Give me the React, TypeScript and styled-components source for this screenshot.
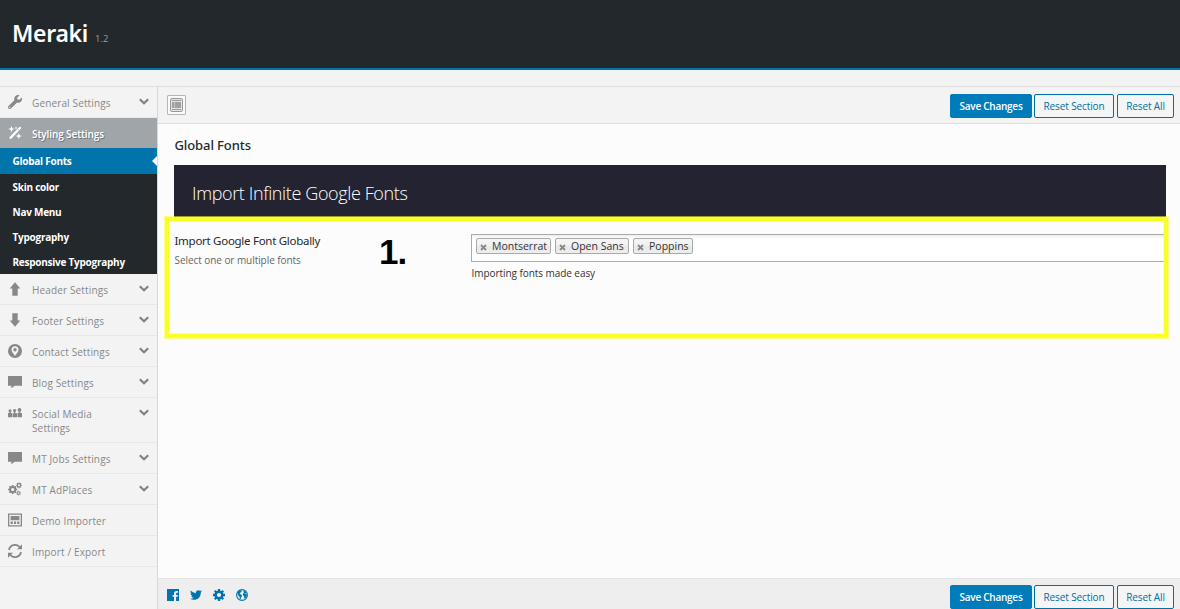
import React from "react";
import styled, { createGlobalStyle, css } from "styled-components";
import { FaWrench, FaTwitter } from "react-icons/fa";

const GlobalStyle = createGlobalStyle`
  *, *::before, *::after { box-sizing: border-box; }
  html, body { margin: 0; padding: 0; }
  body {
    font-family: "Open Sans", "Noto Sans", sans-serif;
    background: #f3f3f3;
    color: #23282d;
    overflow: hidden;
  }
  svg { display: block; }
`;

const Page = styled.div`
  width: 1180px;
  height: 609px;
  display: flex;
  flex-direction: column;
  overflow: hidden;
`;

const Header = styled.header`
  height: 70px;
  flex: none;
  display: flex;
  align-items: baseline;
  padding: 16px 12px 0;
  background: #23282d;
  border-bottom: 2px solid #0074ab;
`;

const Brand = styled.h1`
  margin: 0;
  font-family: "Noto Sans", sans-serif;
  font-size: 23px;
  line-height: 34px;
  font-weight: 600;
  letter-spacing: -0.3px;
  color: #fff;
`;

const Version = styled.span`
  margin-left: 7px;
  font-size: 9.5px;
  color: #999;
`;

const Notice = styled.div`
  height: 17px;
  flex: none;
  border-bottom: 1px solid #dedede;
`;

const Body = styled.div`
  flex: 1;
  min-height: 0;
  display: flex;
`;

const Sidebar = styled.nav`
  width: 158px;
  flex: none;
  border-right: 1px solid #d8d8d8;
  background: #f3f3f3;
`;

const MenuItem = styled.div<{ $active?: boolean; $tall?: boolean }>`
  height: ${(p) => (p.$tall ? 45 : 31)}px;
  display: flex;
  align-items: flex-start;
  padding: 8px 8px 0 7px;
  font-size: 10px;
  line-height: 14px;
  font-weight: 500;
  letter-spacing: 0.14px;
  color: #888;
  border-bottom: 1px solid #e7e7e7;
  ${(p) =>
    p.$active &&
    css`
      height: 30px;
      color: #fff;
      font-weight: 600;
      letter-spacing: -0.1px;
      background: #a0a5aa;
      border-bottom: 0;
      text-shadow: 1px 1px 0 #777;
    `}
`;

const ItemIcon = styled.span`
  width: 16px;
  height: 14px;
  flex: none;
  display: flex;
  align-items: center;
  justify-content: center;
`;

const ItemLabel = styled.span`
  width: 95px;
  margin-left: 9px;
  padding-top: 0.5px;
`;

const Chevron = styled.svg`
  width: 10px;
  height: 7px;
  margin: 3px 0 0 auto;
`;

const SubMenu = styled.div`
  height: 126px;
  background: #23282d;
`;

const SubItem = styled.div<{ $active?: boolean }>`
  height: ${(p) => (p.$active ? 26 : 25)}px;
  display: flex;
  align-items: center;
  justify-content: space-between;
  padding-left: 12.5px;
  padding-top: ${(p) => (p.$active ? 0 : 1)}px;
  font-size: 10px;
  font-weight: 700;
  letter-spacing: -0.25px;
  color: #fff;
  background: ${(p) => (p.$active ? "#0074ab" : "transparent")};
`;

const Pointer = styled.span`
  border: 5px solid transparent;
  border-left: 0;
  border-right-color: #fcfcfc;
`;

const Main = styled.main`
  flex: 1;
  min-width: 0;
  display: flex;
  flex-direction: column;
  background: #fcfcfc;
`;

const ActionBar = styled.div<{ $bottom?: boolean }>`
  flex: none;
  display: flex;
  justify-content: space-between;
  align-items: flex-start;
  height: ${(p) => (p.$bottom ? 31 : 37)}px;
  padding: ${(p) => (p.$bottom ? "6px 6px 0 9px" : "7px 6px 0 9px")};
  background: ${(p) => (p.$bottom ? "#eee" : "#f3f3f3")};
  ${(p) => (p.$bottom ? "border-top: 1px solid #e4e4e4;" : "border-bottom: 1px solid #dedede;")}
`;

const ExpandButton = styled.span`
  width: 19px;
  height: 20px;
  margin-top: 1px;
  border: 1px solid #b5b5b5;
  border-radius: 1px;
  background: #fafafa;
  display: flex;
  align-items: center;
  justify-content: center;
`;

const Buttons = styled.div`
  display: flex;
`;

const Button = styled.button<{ $primary?: boolean; $width: number }>`
  width: ${(p) => p.$width}px;
  height: 24px;
  padding: 0 0 1px;
  border: 1px solid ${(p) => (p.$primary ? "#007cba" : "#0071a1")};
  border-radius: 2px;
  background: ${(p) => (p.$primary ? "#007cba" : "#f3f5f6")};
  color: ${(p) => (p.$primary ? "#fff" : "#0071a1")};
  font: ${(p) => (p.$primary ? 600 : 400)} 10px "Open Sans", "Noto Sans", sans-serif;
  letter-spacing: ${(p) => (p.$primary ? -0.25 : -0.12)}px;
  white-space: nowrap;
  & + & { margin-left: 2px; }
  & + & + & { margin-left: 3px; }
`;

const Content = styled.section`
  flex: 1;
  min-height: 0;
  padding: 13px 14px 0 16px;
`;

const Title = styled.h2`
  margin: 0 0 11px;
  padding-left: 0.5px;
  font-family: "Noto Sans", sans-serif;
  font-size: 13px;
  line-height: 17px;
  font-weight: 500;
  letter-spacing: -0.1px;
`;

const Banner = styled.div`
  height: 52px;
  padding-left: 18px;
  background: #242331;
  color: #fff;
  font-size: 18px;
  font-weight: 300;
  line-height: 56px;
  letter-spacing: -0.38px;
  font-variant-ligatures: none;
  white-space: nowrap;
`;

const Field = styled.div`
  position: relative;
  display: flex;
  height: 122px;
  padding-top: 17px;
`;

const Highlight = styled.div`
  position: absolute;
  left: -10px;
  right: -3px;
  top: -1px;
  bottom: 0;
  border: 1px solid rgba(250, 255, 40, 0.55);
  pointer-events: none;
  &::before {
    content: "";
    display: block;
    height: 100%;
    border: 4px solid #f9ff27;
    box-shadow: inset 0 0 0 1px rgba(250, 255, 40, 0.35);
  }
`;

const FieldInfo = styled.div`
  width: 205px;
  padding-left: 0.5px;
`;

const FieldName = styled.div`
  font-size: 11.5px;
  line-height: 14px;
  font-family: "Noto Sans", sans-serif;
  letter-spacing: -0.28px;
  white-space: nowrap;
`;

const Hint = styled.div<{ $dark?: boolean }>`
  margin-top: ${(p) => (p.$dark ? 4 : 5)}px;
  padding-left: ${(p) => (p.$dark ? 0.5 : 0)}px;
  font-size: 10px;
  line-height: 14px;
  letter-spacing: -0.06px;
  color: ${(p) => (p.$dark ? "#333" : "#666")};
`;

const Step = styled.div`
  width: 92px;
  font: 700 35px/36px "Liberation Sans", Arial, sans-serif;
  letter-spacing: -1px;
  color: #000;
`;

const Control = styled.div`
  flex: 1;
`;

const TagInput = styled.div`
  height: 28px;
  display: flex;
  gap: 4px;
  padding: 3px 4px;
  border: 1px solid #aaa;
  border-right: 0;
  background: linear-gradient(#eee 0, #fff 4px);
`;

const Tag = styled.span<{ $width: number }>`
  width: ${(p) => p.$width}px;
  height: 16px;
  display: flex;
  align-items: center;
  padding-left: 3px;
  border: 1px solid #aaa;
  border-radius: 2px;
  background: linear-gradient(#f4f4f4 20%, #f0f0f0 50%, #e8e8e8 52%, #eee 100%);
  font-size: 10.5px;
  line-height: 13px;
  color: #333;
  white-space: nowrap;
`;

const TagClose = styled.svg`
  width: 7px;
  height: 7px;
  margin: 2px 5px 0 0;
  flex: none;
`;

const Social = styled.div`
  display: flex;
  align-items: center;
  gap: 11px;
  padding-top: 4px;
  color: #0074ab;
`;

const Svg = ({ children, w = 14, h = 14, box = "0 0 14 14" }: { children: React.ReactNode; w?: number; h?: number; box?: string }) => (
  <svg width={w} height={h} viewBox={box} fill="currentColor">
    {children}
  </svg>
);

const teeth = [0, 45, 90, 135];
const Gear = ({ x, y, r }: { x: number; y: number; r: number }) => (
  <g transform={`translate(${x} ${y}) scale(${r})`}>
    <circle r="0.56" fill="none" stroke="currentColor" strokeWidth="0.42" />
    {teeth.map((a) => (
      <path key={a} d="M-.19-1h.38v.4h-.38zM-.19.6h.38v.4h-.38z" transform={`rotate(${a})`} />
    ))}
  </g>
);

const Magic = () => (
  <Svg>
    <path d="M1.2 11.6 11.9.6l1.5 1.5L2.8 13.2z" />
    <path d="M3.500 0l.8 2.200 2.300.8-2.300.8-.8 2.400-.9-2.400L.2 3l2.400-.8zM10.800 7.200l.8 2.100 2.200.8-2.200.8-.8 2.400-.8-2.400-2.200-.8 2.200-.8zM8 .5l.4 1.100 1.100.4-1.100.4L8 3.500l-.4-1.100L6.500 2l1.100-.4z" />
    <path d="M10.200 3.400l1 .9" stroke="#a0a5aa" strokeWidth=".8" />
  </Svg>
);
const ArrowUp = () => <Svg><path d="M7 .2 12.300 6.600H9.700V13.800H4.300V6.600H1.700z" /></Svg>;
const ArrowDown = () => <Svg><path d="M7 13.800 12.300 7.400H9.700V.2H4.300V7.400H1.700z" /></Svg>;
const Marker = () => (
  <Svg>
    <path
      fillRule="evenodd"
      d="M7 0a7 7 0 1 1 0 14A7 7 0 0 1 7 0zm0 2.200a3.500 3.500 0 0 0-3.500 3.500C3.500 8 5.500 9.300 7 12c1.500-2.700 3.500-4 3.500-6.300A3.500 3.500 0 0 0 7 2.200zm0 1.900a1.700 1.700 0 1 1 0 3.400 1.700 1.700 0 0 1 0-3.400z"
    />
  </Svg>
);
const Comment = () => <Svg><path d="M0 1h14v9.700H6.800L3.300 13.200V10.700H0z" /></Svg>;
const Group = () => (
  <Svg>
    <circle cx="2" cy="4.700" r="1.500" />
    <path d="M1.300 6h1.400v1H4.200v4.300H0V7h1.300z" />
    <circle cx="6.600" cy="4.500" r="1.600" />
    <path d="M5.900 6h1.400v1.200H9v4.100H4.700V7.200h1.200z" />
    <circle cx="11.500" cy="3.900" r="1.900" />
    <path d="M10.700 5.500h1.600v1.400H14v4.400H9.500V6.900h1.200z" />
  </Svg>
);
const Cogs = () => (
  <Svg>
    <Gear x={4.700} y={7.500} r={4.600} />
    <Gear x={11} y={3.300} r={2.900} />
    <Gear x={10.600} y={11.100} r={2.300} />
  </Svg>
);
const Website = () => (
  <Svg>
    <path fillRule="evenodd" d="M0 .5h14v13H0zM1.300 1.800v10.400h11.400V1.800z" />
    <path d="M2.600 3h8.800v4.300H2.600zM2.600 8.500h2.200v2.400H2.600zM5.900 8.500h2.200v2.400H5.900zM9.200 8.500h2.200v2.400H9.200z" />
  </Svg>
);
const Refresh = () => (
  <Svg>
    <g fill="none" stroke="currentColor" strokeWidth="1.800">
      <path d="M1 6A6.100 6.100 0 0 1 11.600 3M13 8A6.100 6.100 0 0 1 2.400 11" />
    </g>
    <path d="M14 .3V5.300H9zM0 13.700V8.700h5z" />
  </Svg>
);

const Facebook = () => (
  <Svg w={12} h={12} box="0 0 12 12">
    <path
      fillRule="evenodd"
      d="M0 0h12v12H9.100V7.700h1.500l.3-1.800H9.100V4.700c0-.6.300-.9.900-.9h1V2.100H9.400C7.800 2.100 7 3 7 4.400v1.500H5.600v1.800H7V12H0z"
    />
  </Svg>
);
const Globe = () => (
  <Svg w={12} h={12} box="0 0 12 12">
    <circle cx="6" cy="6" r="5.400" fill="none" stroke="currentColor" strokeWidth="1.100" />
    <path d="M1.500 3.300 3.400 1.300l2 .3.300 1.200-1.200.8-1 1.300 1.700.6 1 1.400-1.200 1.300-.4 2.200-.8-.4-.3-2.600L1.800 6zM7.300 1.200l2.200 1.200 1.300 2-.9.300-.9-.6-.7.500 1.600.6 1.100.3-.7 2.600-1.200 1.500-.8-.4-.3-2.200-1.100-.8.1-1.700 1-1-.4-1z" />
  </Svg>
);

type Item = { label: string; icon: React.ReactNode; arrow?: boolean; tall?: boolean };

const lowerItems: Item[] = [
  { label: "Header Settings", icon: <ArrowUp />, arrow: true },
  { label: "Footer Settings", icon: <ArrowDown />, arrow: true },
  { label: "Contact Settings", icon: <Marker />, arrow: true },
  { label: "Blog Settings", icon: <Comment />, arrow: true },
  { label: "Social Media Settings", icon: <Group />, arrow: true, tall: true },
  { label: "MT Jobs Settings", icon: <Comment />, arrow: true },
  { label: "MT AdPlaces", icon: <Cogs />, arrow: true },
  { label: "Demo Importer", icon: <Website /> },
  { label: "Import / Export", icon: <Refresh /> },
];

const subItems = ["Skin color", "Nav Menu", "Typography", "Responsive Typography"];

const tags = [
  { name: "Montserrat", width: 75 },
  { name: "Open Sans", width: 74 },
  { name: "Poppins", width: 60 },
];

const MenuRow = ({ label, icon, arrow, tall }: Item) => (
  <MenuItem $tall={tall}>
    <ItemIcon>{icon}</ItemIcon>
    <ItemLabel>{label}</ItemLabel>
    {arrow && (
      <Chevron viewBox="0 0 10 7">
        <path d="M.8 1.200 5 5.200 9.200 1.200" fill="none" stroke="#808080" strokeWidth="2.100" />
      </Chevron>
    )}
  </MenuItem>
);

const Actions = () => (
  <Buttons>
    <Button $primary $width={82}>Save Changes</Button>
    <Button $width={80}>Reset Section</Button>
    <Button $width={57}>Reset All</Button>
  </Buttons>
);

export default function App() {
  return (
    <Page>
      <GlobalStyle />
      <Header>
        <Brand>Meraki</Brand>
        <Version>1.2</Version>
      </Header>
      <Notice />
      <Body>
        <Sidebar>
          <MenuRow label="General Settings" icon={<FaWrench size={14} />} arrow />
          <MenuItem $active>
            <ItemIcon><Magic /></ItemIcon>
            <ItemLabel>Styling Settings</ItemLabel>
          </MenuItem>
          <SubMenu>
            <SubItem $active>
              Global Fonts
              <Pointer />
            </SubItem>
            {subItems.map((s) => (
              <SubItem key={s}>{s}</SubItem>
            ))}
          </SubMenu>
          {lowerItems.map((item) => (
            <MenuRow key={item.label} {...item} />
          ))}
        </Sidebar>
        <Main>
          <ActionBar>
            <ExpandButton>
              <svg width="13" height="14" viewBox="0 0 13 14">
                <rect x=".5" y=".5" width="12" height="13" rx="1.500" fill="#e4e4e4" stroke="#999" />
                <path d="M2 2.500h9M2 11.500h9" stroke="#999" />
                <path d="M2 4h2v6H2zM4.500 4H11v6H4.500z" fill="#a0a0a0" />
              </svg>
            </ExpandButton>
            <Actions />
          </ActionBar>
          <Content>
            <Title>Global Fonts</Title>
            <Banner>Import Infinite Google Fonts</Banner>
            <Field>
              <FieldInfo>
                <FieldName>Import Google Font Globally</FieldName>
                <Hint>Select one or multiple fonts</Hint>
              </FieldInfo>
              <Step>1.</Step>
              <Control>
                <TagInput>
                  {tags.map((t) => (
                    <Tag key={t.name} $width={t.width}>
                      <TagClose viewBox="0 0 7 7">
                        <path d="M1 1l5 5M6 1L1 6" stroke="#888" strokeWidth="1.800" />
                      </TagClose>
                      {t.name}
                    </Tag>
                  ))}
                </TagInput>
                <Hint $dark>Importing fonts made easy</Hint>
              </Control>
              <Highlight />
            </Field>
          </Content>
          <ActionBar $bottom>
            <Social>
              <Facebook />
              <FaTwitter size={12} />
              <Svg w={12} h={12} box="0 0 12 12"><Gear x={6} y={6} r={6} /></Svg>
              <Globe />
            </Social>
            <Actions />
          </ActionBar>
        </Main>
      </Body>
    </Page>
  );
}
